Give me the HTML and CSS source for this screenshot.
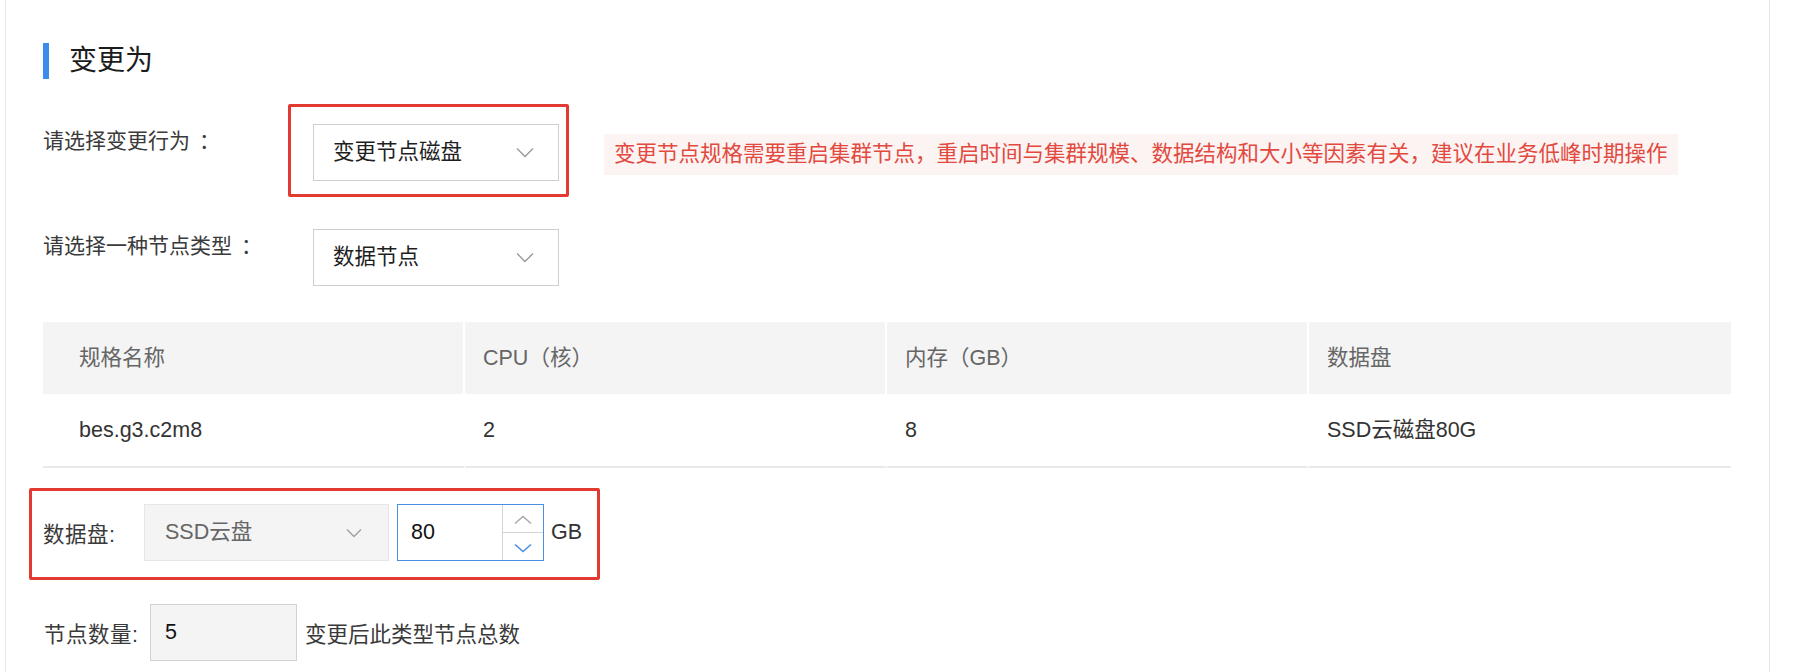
FILE: index.html
```html
<!DOCTYPE html>
<html lang="zh-CN">
<head>
<meta charset="utf-8">
<title>变更为</title>
<link rel="stylesheet" href="styles.css">
</head>
<body>
<div class="page">
  <div class="section-title">
    <span class="title-bar"></span>
    <h2 class="title-text">变更为</h2>
  </div>

  <div class="form-row row-action">
    <div class="row-label">请选择变更行为<span class="colon">：</span></div>
    <div class="marked">
      <div class="select">
        <span class="select-value">变更节点磁盘</span>
        <svg class="chevron" width="18" height="11" viewBox="0 0 18 11"><polyline points="1,1.5 9,9.5 17,1.5" fill="none" stroke="#9a9a9a" stroke-width="1.4"/></svg>
      </div>
      <span class="mark mark-action"></span>
    </div>
    <div class="warning">变更节点规格需要重启集群节点，重启时间与集群规模、数据结构和大小等因素有关，建议在业务低峰时期操作</div>
  </div>

  <div class="form-row row-type">
    <div class="row-label">请选择一种节点类型<span class="colon">：</span></div>
    <div class="select">
      <span class="select-value">数据节点</span>
      <svg class="chevron" width="18" height="11" viewBox="0 0 18 11"><polyline points="1,1.5 9,9.5 17,1.5" fill="none" stroke="#9a9a9a" stroke-width="1.4"/></svg>
    </div>
  </div>

  <table class="spec-table">
    <colgroup><col><col><col><col></colgroup>
    <thead>
      <tr><th>规格名称</th><th>CPU（核）</th><th>内存（GB）</th><th>数据盘</th></tr>
    </thead>
    <tbody>
      <tr><td>bes.g3.c2m8</td><td>2</td><td>8</td><td>SSD云磁盘80G</td></tr>
    </tbody>
  </table>

  <div class="disk-row">
    <span class="inline-label disk-label">数据盘:</span>
    <div class="select select-disabled">
      <span class="select-value">SSD云盘</span>
      <svg class="chevron" width="16" height="10" viewBox="0 0 16 10"><polyline points="1,1.5 8,8.5 15,1.5" fill="none" stroke="#a0a0a0" stroke-width="1.4"/></svg>
    </div>
    <div class="number-input">
      <span class="number-value">80</span>
      <div class="spinner">
        <span class="spin spin-up"><svg width="18" height="10" viewBox="0 0 18 10"><polyline points="1,8.5 9,1.5 17,8.5" fill="none" stroke="#a8a8a8" stroke-width="1.4"/></svg></span>
        <span class="spin spin-down"><svg width="18" height="10" viewBox="0 0 18 10"><polyline points="1,1.5 9,8.5 17,1.5" fill="none" stroke="#4a90e2" stroke-width="1.6"/></svg></span>
      </div>
    </div>
    <span class="unit">GB</span>
    <span class="mark mark-disk"></span>
  </div>

  <div class="count-row">
    <span class="inline-label count-label">节点数量:</span>
    <div class="count-input">5</div>
    <span class="hint">变更后此类型节点总数</span>
  </div>
</div>
</body>
</html>
```

FILE: styles.css
```css
* { box-sizing: border-box; }

html, body {
  margin: 0;
  padding: 0;
  background: #fff;
  overflow: hidden;
}

body {
  font-family: "Liberation Sans", "Noto Sans CJK SC", sans-serif;
  font-size: 21.5px;
  color: #333;
}

.page {
  margin-left: 5px;
  width: 1765px;
  min-height: 100vh;
  border-left: 1px solid #e6e6e6;
  border-right: 1px solid #e6e6e6;
  padding: 43px 37px 0 37px;
}

.section-title {
  display: flex;
  align-items: center;
  height: 36px;
}

.title-bar {
  width: 6px;
  height: 36px;
  background: #3b8ced;
}

.title-text {
  margin: 0 0 0 20px;
  font-size: 28px;
  font-weight: normal;
  color: #1c1c1c;
  line-height: 36px;
}

.form-row {
  display: flex;
  align-items: flex-start;
}

.row-action { margin-top: 45px; }
.row-type { margin-top: 48px; }

.row-label {
  width: 270px;
  line-height: 34px;
  font-size: 21px;
  color: #3a3a3a;
}

.colon {
  padding-left: 9px;
}

.marked {
  position: relative;
}

.select {
  width: 246px;
  height: 57px;
  border: 1px solid #cfcfcf;
  background: #fff;
  display: flex;
  align-items: center;
  justify-content: space-between;
  padding: 0 24px 0 19px;
  color: #1f1f1f;
}

.select-value { line-height: 1; }

.chevron { display: block; }

.mark {
  position: absolute;
  border: 3.5px solid #e23a30;
  border-radius: 2px;
  pointer-events: none;
}

.mark-action {
  left: -25px;
  top: -20px;
  right: -10px;
  bottom: -16px;
}

.warning {
  margin-left: 45px;
  margin-top: 10px;
  height: 41px;
  line-height: 41px;
  padding: 0 10px;
  background: #fcf3f3;
  color: #e24a40;
}

.spec-table {
  margin-top: 36px;
  width: 1688px;
  table-layout: fixed;
  border-collapse: separate;
  border-spacing: 0;
}

.spec-table col { width: 422px; }

.spec-table th,
.spec-table td {
  height: 72px;
  line-height: 30px;
  text-align: left;
  font-weight: normal;
  padding: 0 0 0 18px;
  border-right: 2px solid #fff;
  vertical-align: middle;
}

.spec-table th:last-child,
.spec-table td:last-child { border-right: none; }

.spec-table th:first-child,
.spec-table td:first-child { padding-left: 36px; }

.spec-table th {
  background: #f4f4f4;
  color: #666;
}

.spec-table td {
  color: #333;
  height: 74px;
  border-bottom: 2px solid #e9e9e9;
}

.disk-row {
  position: relative;
  margin-top: 36px;
  display: flex;
  align-items: center;
  height: 57px;
}

.inline-label { color: #3a3a3a; }

.disk-label { width: 101px; letter-spacing: 0.5px; }

.select-disabled {
  width: 245px;
  background: #f4f4f4;
  border-color: #e6e6e6;
  color: #666;
  padding: 0 26px 0 20px;
}

.number-input {
  margin-left: 8px;
  width: 147px;
  height: 57px;
  border: 1px solid #4a90e2;
  display: flex;
  align-items: stretch;
}

.number-value {
  flex: 1;
  display: flex;
  align-items: center;
  padding-left: 13px;
  color: #111;
}

.spinner {
  width: 41px;
  border-left: 1px solid #d4d4d4;
  display: flex;
  flex-direction: column;
}

.spin {
  flex: 1;
  display: flex;
  align-items: center;
  justify-content: center;
}

.spin svg { display: block; }

.spin-up {
  border-bottom: 1px solid #d4d4d4;
  padding-top: 2px;
}

.spin-down { padding-top: 2px; }

.unit {
  margin-left: 7px;
  color: #333;
}

.mark-disk {
  left: -14px;
  top: -16px;
  width: 571px;
  height: 92px;
}

.count-row {
  margin-top: 43px;
  display: flex;
  align-items: center;
  height: 57px;
}

.count-label { width: 107px; padding-left: 1px; letter-spacing: 0.5px; }

.count-input {
  width: 147px;
  height: 57px;
  background: #f4f4f4;
  border: 1px solid #d2d2d2;
  display: flex;
  align-items: center;
  padding-left: 14px;
  color: #111;
}

.hint {
  margin-left: 8px;
  color: #3a3a3a;
}
```
